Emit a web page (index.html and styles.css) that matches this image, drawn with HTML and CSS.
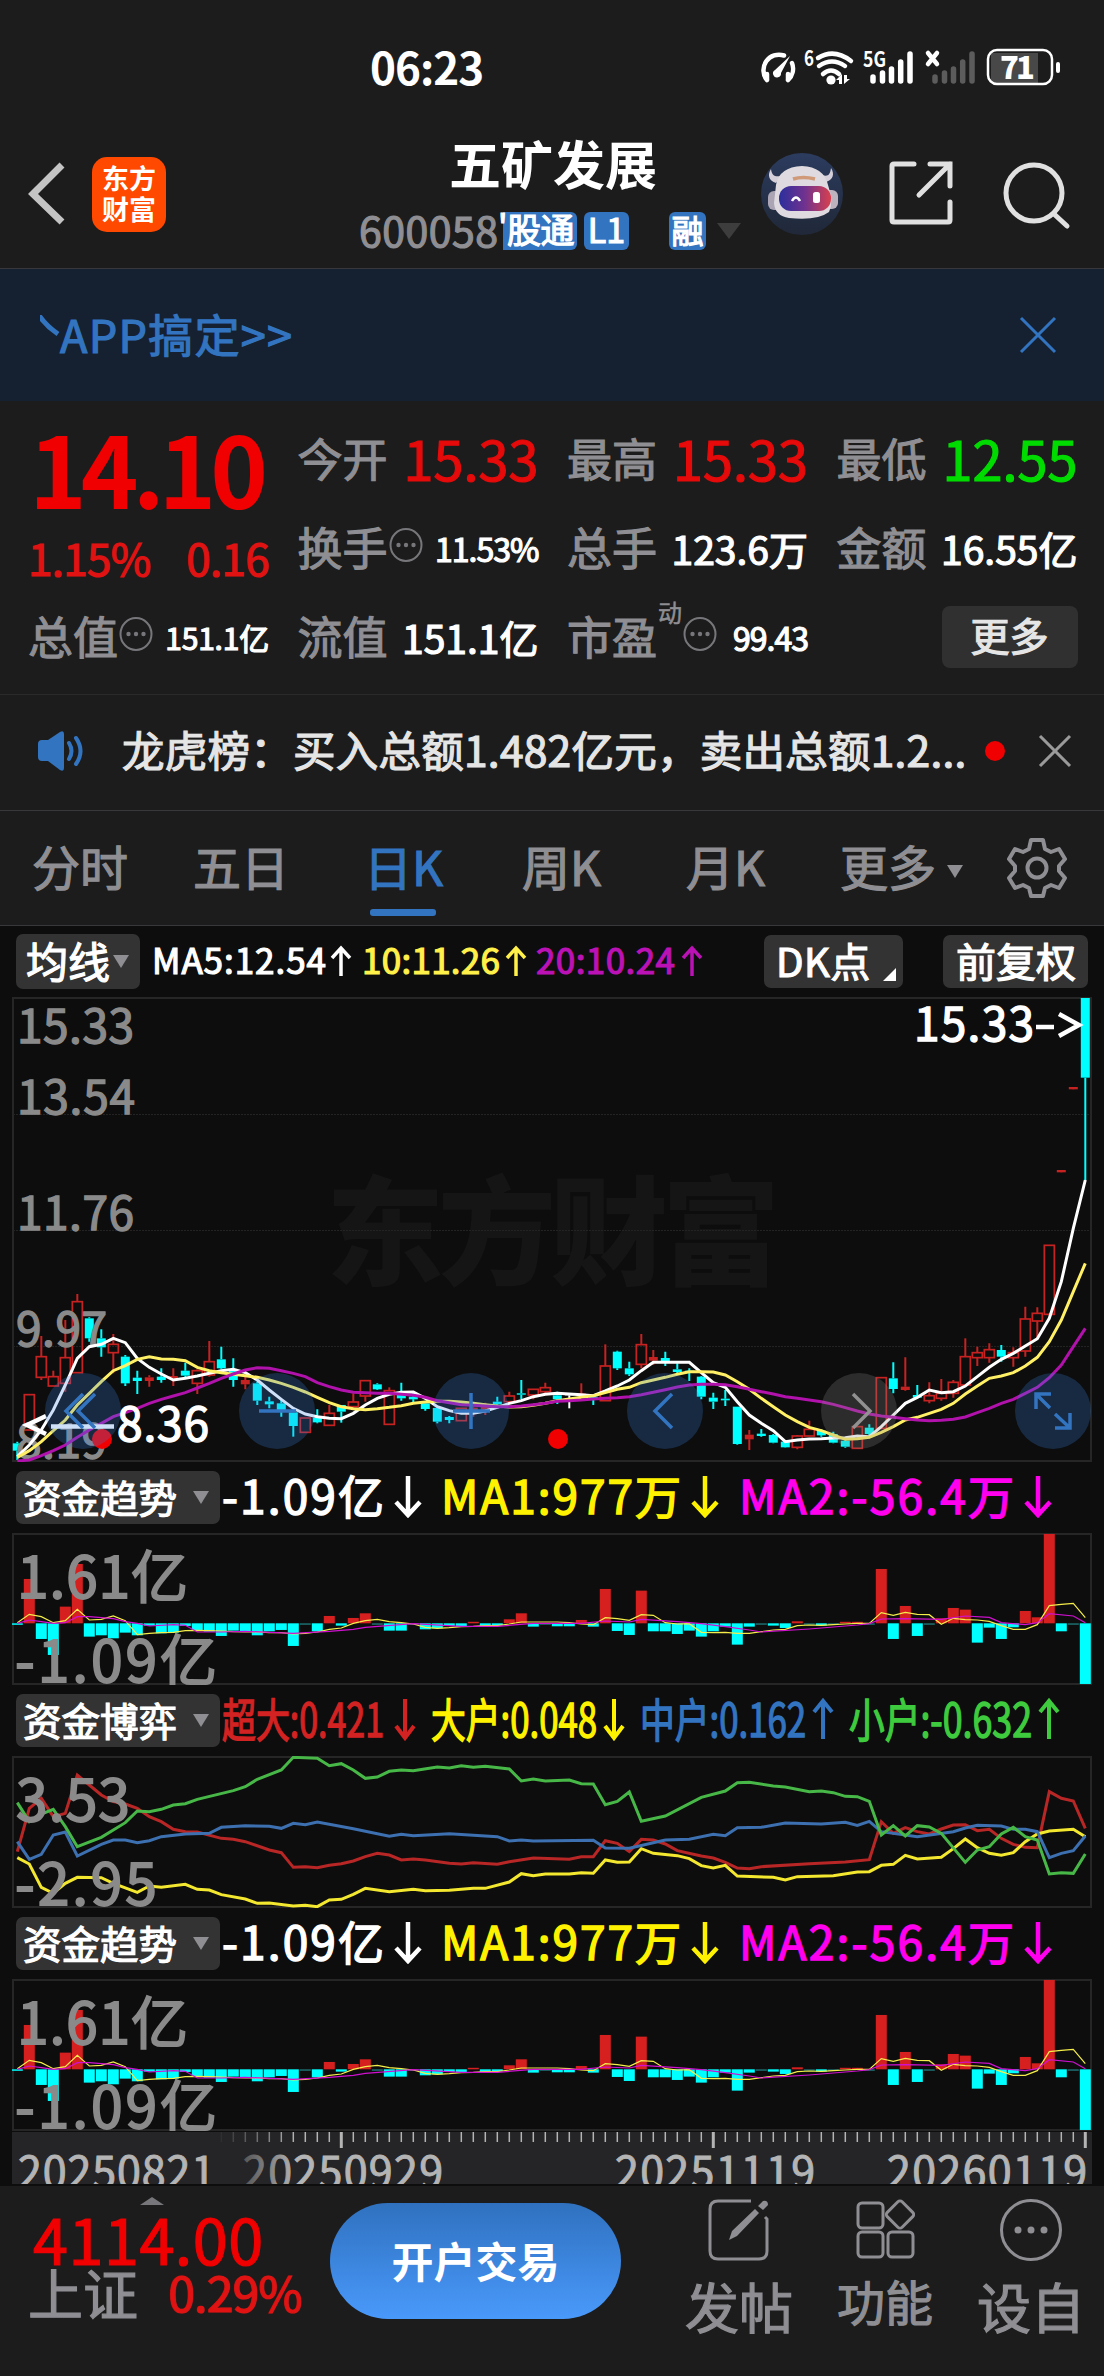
FILE: index.html
```html
<!DOCTYPE html>
<html lang="zh-CN">
<head>
    <meta charset="UTF-8">
    <meta name="viewport" content="width=device-width, initial-scale=1.0">
    <title>五矿发展 600058</title>
    <link rel="stylesheet" href="styles.css">
</head>
<body>
    <svg class="defs" width="0" height="0">
        <symbol id="down" viewBox="0 0 28 42"><path fill="none" d="M14 0V38M2 26L14 39L26 26"/></symbol>
        <symbol id="dots" viewBox="0 0 34 36">
            <ellipse cx="17" cy="18" rx="15.5" ry="16"/>
            <g class="dot"><circle cx="9.5" cy="18" r="2.2"/><circle cx="17" cy="18" r="2.2"/><circle cx="24.5" cy="18" r="2.2"/></g>
        </symbol>
    </svg>

    <div class="status-bar">
        <span class="clock">06:23</span>
        <svg class="status-icons" width="330" height="50" viewBox="740 44 330 50">
            <g class="w-line">
                <path d="M767 80A15.5 15.5 0 0 1 784 55.5M792 63A15.5 15.5 0 0 1 788 80M767 80V74M788 80V74"/>
                <path d="M818 58Q834 48 851 61M819 66Q832 57 845 66M823 74Q831 67 839 74"/>
            </g>
            <path class="w-fill" d="M790 56L781 73A4 4 0 1 1 775 70Z"/>
            <circle class="w-fill" cx="831" cy="80" r="4.6"/>
            <path class="w-fill" d="M836 80L842 74V84H839V80ZM844 75H847V79H850L844 84Z"/>
            <text class="st-small" x="804" y="66" textLength="10" lengthAdjust="spacingAndGlyphs">6</text>
            <text class="st-small" x="863" y="67" textLength="23" lengthAdjust="spacingAndGlyphs">5G</text>
            <g class="bars"><path d="M873 77V81M882.500 73V81M891.500 69V81M900.700 62V81M910 54V81"/></g>
            <g class="bars dim"><path d="M935 77V81M944.500 73V81M953.500 69V81M962.700 62V81M972 54V81"/></g>
            <path class="w-line" d="M928 53L937 64M937 53L928 64"/>
            <rect x="991" y="53" width="47" height="30" fill="#484848"/>
            <rect class="battery" x="988" y="50" width="64" height="34" rx="9"/>
            <rect class="w-fill" x="1056" y="62" width="4" height="11" rx="2"/>
            <text class="st-batt" x="1000" y="79" textLength="35">71</text>
        </svg>
    </div>

    <header class="header">
        <svg class="back" width="38" height="64" viewBox="0 0 38 64"><path d="M34 4L5 33L34 61"/></svg>
        <div class="logo">东方<br>财富</div>
        <div class="title">
            <h1>五矿发展</h1>
            <div class="sub">
                <span class="code">600058</span>
                <span class="tag cut">'股通</span>
                <span class="tag l1">L1</span>
                <span class="tag rong">融</span>
                <i class="tri big"></i>
            </div>
        </div>
        <svg class="avatar" width="82" height="82" viewBox="0 0 82 82">
            <defs>
                <linearGradient id="visor"><stop offset="0" stop-color="#2b2f9c"/><stop offset=".5" stop-color="#71328f"/><stop offset="1" stop-color="#d8404e"/></linearGradient>
                <linearGradient id="sky" x2="0" y2="1"><stop offset="0" stop-color="#2c3c5f"/><stop offset="1" stop-color="#202838"/></linearGradient>
            </defs>
            <circle cx="41" cy="41" r="41" fill="url(#sky)"/>
            <path fill="#d4cfd8" d="M15 30C8 28 6 22 10 16C11 23 14 24 20 23ZM65 29C72 27 74 21 70 15C69 22 67 24 61 22Z"/>
            <rect x="7" y="38" width="14" height="19" rx="6" fill="#aaa4b4"/>
            <rect x="63" y="37" width="14" height="19" rx="6" fill="#bcb3bf"/>
            <path fill="#dedae0" d="M15 32Q18 14 41 13Q63 14 67 32Q73 49 68 59Q56 68 28 65Q14 63 13 50Z"/>
            <rect x="18" y="33" width="52" height="25" rx="12" fill="url(#visor)"/>
            <path d="M32 26Q42 23 54 26" stroke="#d09a78" stroke-width="3.500" fill="none"/>
            <path d="M31 48Q35 41 39 48" stroke="#fff" stroke-width="2.500" fill="none"/>
            <rect x="52" y="39" width="7" height="11" rx="2.500" fill="#fff"/>
        </svg>
        <svg class="share" width="68" height="68" viewBox="0 0 68 68"><path d="M26 4H6Q4 4 4 6V60Q4 62 6 62H60Q62 62 62 60V42M42 4H62V26M62 4L31 35"/></svg>
        <svg class="search" width="70" height="70" viewBox="0 0 70 70"><circle cx="32" cy="33" r="28"/><path d="M52 54L65 66"/></svg>
    </header>

    <div class="banner">
        <svg class="stroke" width="20" height="22" viewBox="0 0 20 22"><path d="M-2 -1Q6 11 18 19"/></svg>
        <span>APP搞定&gt;&gt;</span>
        <svg class="close" width="38" height="38" viewBox="0 0 38 38"><path d="M2 2L36 36M36 2L2 36"/></svg>
    </div>

    <section class="quote">
        <div class="price-box">
            <div class="price">14.10</div>
            <div class="change"><span>1.15%</span><span>0.16</span></div>
        </div>
        <div class="cell"><label>今开</label><b class="lg red">15.33</b></div>
        <div class="cell"><label>最高</label><b class="lg red">15.33</b></div>
        <div class="cell"><label>最低</label><b class="lg green">12.55</b></div>
        <div class="cell"><label>换手</label><svg class="more"><use href="#dots"/></svg><b class="sm">11.53%</b></div>
        <div class="cell"><label>总手</label><b>123.6万</b></div>
        <div class="cell"><label>金额</label><b>16.55亿</b></div>
        <div class="cell"><label>总值</label><svg class="more"><use href="#dots"/></svg><b class="xs">151.1亿</b></div>
        <div class="cell"><label>流值</label><b>151.1亿</b></div>
        <div class="cell"><label>市盈</label><sup>动</sup><svg class="more"><use href="#dots"/></svg><b class="sm">99.43</b></div>
        <div class="cell"><button class="more-btn">更多</button></div>
    </section>

    <div class="news">
        <svg class="speaker" width="50" height="42" viewBox="0 0 50 42">
            <path class="body" d="M2 14Q2 10 6 10H12L24 2Q28 0 28 4V38Q28 42 24 40L12 31H6Q2 31 2 27Z"/>
            <path class="wave" d="M33 13Q38 21 33 29M40 8Q49 21 40 34"/>
        </svg>
        <p>龙虎榜：买入总额1.482亿元，卖出总额1.2...</p>
        <i class="red-dot"></i>
        <svg class="close" width="34" height="34" viewBox="0 0 34 34"><path d="M2 2L32 32M32 2L2 32"/></svg>
    </div>

    <nav class="tabs">
        <span>分时</span>
        <span>五日</span>
        <span class="active">日K</span>
        <span>周K</span>
        <span>月K</span>
        <span>更多<i class="tri"></i></span>
        <svg class="gear" width="60" height="60" viewBox="0 0 60 60">
            <path d="M24 2H36L38 11L44 14L52 11L58 21L52 28V33L58 40L52 50L44 47L38 50L36 58H24L22 50L16 47L8 50L2 40L8 33V28L2 21L8 11L16 14L22 11Z"/>
            <circle cx="30" cy="30" r="9.500"/>
        </svg>
    </nav>

    <main class="charts">
        <div class="legend ma">
            <button class="chip short">均线<i class="tri"></i></button>
            <svg class="values" width="600" height="71" viewBox="145 926 600 71">
                <g fill="#fff" stroke="#fff"><text x="152" y="974" textLength="174">MA5:12.54</text><path d="M341 976V948M332 958L341 948L350 958"/></g>
                <g fill="#fff04a" stroke="#fff04a"><text x="362" y="974" textLength="138">10:11.26</text><path d="M516 976V948M507 958L516 948L525 958"/></g>
                <g fill="#bb12b5" stroke="#bb12b5"><text x="536" y="974" textLength="139">20:10.24</text><path d="M692 976V948M683 958L692 948L701 958"/></g>
            </svg>
            <button class="chip dk">DK点<i class="corner"></i></button>
            <button class="chip fq">前复权</button>
        </div>
        <svg id="kline" class="chart" width="1080" height="465" viewBox="12 997 1080 465"></svg>

        <div class="legend">
            <button class="chip">资金趋势<i class="tri"></i></button>
            <svg class="values" width="870" height="71" viewBox="222 1462 870 71">
                <g fill="#fff" stroke="#fff"><text x="222" y="1514" textLength="162">-1.09亿</text><use href="#down" x="394" y="1476" width="28" height="42"/></g>
                <g fill="#fff200" stroke="#fff200"><text x="441" y="1514" textLength="240">MA1:977万</text><use href="#down" x="691" y="1476" width="28" height="42"/></g>
                <g fill="#f0e" stroke="#f0e"><text x="739" y="1514" textLength="275">MA2:-56.4万</text><use href="#down" x="1024" y="1476" width="28" height="42"/></g>
            </svg>
        </div>
        <svg class="chart fund" width="1080" height="152" viewBox="12 1533 1080 152"></svg>

        <div class="legend">
            <button class="chip">资金博弈<i class="tri"></i></button>
            <svg class="values narrow" width="870" height="71" viewBox="222 1685 870 71">
                <g fill="#d32222" stroke="#d32222"><text x="222" y="1737" textLength="162" lengthAdjust="spacingAndGlyphs">超大:0.421</text><path d="M405 1699V1737M396 1726L405 1738L414 1726"/></g>
                <g fill="#fff200" stroke="#fff200"><text x="431" y="1737" textLength="166" lengthAdjust="spacingAndGlyphs">大户:0.048</text><path d="M614 1699V1737M605 1726L614 1738L623 1726"/></g>
                <g fill="#3374c0" stroke="#3374c0"><text x="640" y="1737" textLength="166" lengthAdjust="spacingAndGlyphs">中户:0.162</text><path d="M823 1739V1701M814 1712L823 1701L832 1712"/></g>
                <g fill="#3ecb3e" stroke="#3ecb3e"><text x="849" y="1737" textLength="183" lengthAdjust="spacingAndGlyphs">小户:-0.632</text><path d="M1049 1739V1701M1040 1712L1049 1701L1058 1712"/></g>
            </svg>
        </div>
        <svg id="game" class="chart" width="1080" height="152" viewBox="12 1756 1080 152"></svg>

        <div class="legend">
            <button class="chip">资金趋势<i class="tri"></i></button>
            <svg class="values" width="870" height="71" viewBox="222 1462 870 71">
                <g fill="#fff" stroke="#fff"><text x="222" y="1514" textLength="162">-1.09亿</text><use href="#down" x="394" y="1476" width="28" height="42"/></g>
                <g fill="#fff200" stroke="#fff200"><text x="441" y="1514" textLength="240">MA1:977万</text><use href="#down" x="691" y="1476" width="28" height="42"/></g>
                <g fill="#f0e" stroke="#f0e"><text x="739" y="1514" textLength="275">MA2:-56.4万</text><use href="#down" x="1024" y="1476" width="28" height="42"/></g>
            </svg>
        </div>
        <svg class="chart fund" width="1080" height="152" viewBox="12 1533 1080 152"></svg>
        <svg id="axis" class="chart axis" width="1080" height="52" viewBox="12 2134 1080 52"></svg>
    </main>

    <footer class="bottom">
        <div class="index">
            <i class="tri up"></i>
            <div class="index-value">4114.00</div>
            <div class="index-row"><span>上证</span><b>0.29%</b></div>
        </div>
        <button class="open-btn">开户交易</button>
        <div class="action post">
            <svg width="62" height="62" viewBox="0 0 62 62"><path d="M43 2H10Q2 2 2 10V52Q2 60 10 60H51Q59 60 59 52V20L57 18"/><path class="solid" d="M21 41L24 32L47 10L51 14L29 37ZM50 7L55 2Q60 1 60 6L55 11Z"/></svg>
            <span>发帖</span>
        </div>
        <div class="action func">
            <svg width="60" height="60" viewBox="0 0 60 60"><rect x="3" y="4" width="25" height="25" rx="4"/><rect x="3" y="33" width="25" height="25" rx="4"/><rect x="33" y="33" width="25" height="25" rx="4"/><rect x="34.500" y="5" width="21" height="21" rx="3" transform="rotate(45 45 15.500)"/></svg>
            <span>功能</span>
        </div>
        <div class="action set">
            <svg width="62" height="62" viewBox="0 0 62 62"><circle cx="31" cy="31" r="29.500"/><g class="solid"><circle cx="18" cy="31" r="3.500"/><circle cx="31" cy="31" r="3.500"/><circle cx="44" cy="31" r="3.500"/></g></svg>
            <span>设自</span>
        </div>
    </footer>

    <script src="charts.js"></script>
</body>
</html>
```
FILE: styles.css
```css
* {
    box-sizing: border-box;
}
body {
    margin: 0;
    width: 1104px;
    height: 2376px;
    overflow: hidden;
    background: #1c1c1c;
    color: #fff;
    font-family: "Noto Sans CJK SC", sans-serif;
    font-weight: 400;
    -webkit-text-stroke: 1.200px;
}
button {
    border: 0;
    padding: 0;
    color: #fff;
    font-family: inherit;
    -webkit-text-stroke: 1.200px;
}
svg {
    display: block;
    flex: none;
    fill: none;
}
.defs {
    position: absolute;
}
.tri {
    display: inline-block;
    border: 8px solid transparent;
    border-top: 13px solid #8e8e93;
    border-bottom: 0;
}
.tri.big {
    border-width: 16px 12px 0;
    border-top-color: #3d3d3d;
    margin-left: 11px;
}
.tri.up {
    border: 12px solid transparent;
    border-top: 0;
    border-bottom: 8px solid #77777b;
}

/* status bar */
.status-bar {
    display: flex;
    height: 115px;
    padding: 44px 0 0 370px;
    -webkit-text-stroke: 0;
}
.clock {
    width: 370px;
    font-size: 44px;
    line-height: 44px;
    font-weight: 700;
    letter-spacing: -1px;
}
.w-line {
    stroke: #fff;
    stroke-width: 4.500;
    stroke-linecap: round;
}
.w-fill {
    fill: #fff;
}
.bars {
    stroke: #fff;
    stroke-width: 5.500;
    stroke-linecap: round;
}
.dim {
    stroke: #5c5c5c;
}
.battery {
    stroke: #fff;
    stroke-width: 2.500;
}
.st-small {
    fill: #fff;
    font-size: 21px;
    font-weight: 700;
}
.st-batt {
    fill: #fff;
    font-size: 31px;
    font-weight: 900;
}

/* header */
.header {
    display: flex;
    height: 154px;
    padding-left: 28px;
    border-bottom: 1px solid #38383c;
}
.back {
    margin-top: 46px;
    stroke: #c4c4c4;
    stroke-width: 7;
}
.logo {
    width: 74px;
    height: 75px;
    margin: 42px 0 0 26px;
    padding-top: 5px;
    border-radius: 15px;
    background: #ff4800;
    font-size: 27px;
    line-height: 31px;
    font-weight: 700;
    text-align: center;
    -webkit-text-stroke: 0;
}
.title {
    width: 400px;
    margin-left: 193px;
}
.title h1 {
    margin: 18px 0 0 90px;
    font-size: 52px;
    line-height: 60px;
    font-weight: 700;
    -webkit-text-stroke: 0;
}
.sub {
    display: flex;
    align-items: center;
    height: 38px;
    margin-top: 19px;
}
.code {
    width: 144px;
    margin-top: -5px;
    color: #8e8e93;
    font-size: 41px;
    line-height: 36px;
    letter-spacing: 0.500px;
}
.tag {
    height: 38px;
    border-radius: 6px;
    background: #3374c0;
    font-size: 34px;
    line-height: 34px;
    text-align: center;
}
.tag.cut {
    display: flex;
    justify-content: flex-end;
    width: 74px;
    padding-right: 3px;
    border-radius: 0 6px 6px 0;
    white-space: nowrap;
    letter-spacing: -0.500px;
}
.tag.l1 {
    width: 45px;
    margin-left: 7px;
}
.tag.rong {
    width: 37px;
    margin-left: 40px;
    font-size: 32px;
}
.avatar {
    margin: 38px 0 0 2px;
}
.share, .search {
    stroke: #e0e0e0;
    stroke-width: 5;
    stroke-linecap: round;
    margin: 45px 0 0 45px;
}
.search {
    margin-left: 46px;
}

.banner {
    display: flex;
    align-items: center;
    height: 132px;
    padding: 0 47px 0 40px;
    background: #152130;
    color: #3374c0;
    font-size: 45px;
    line-height: 60px;
    letter-spacing: 1.300px;
}
.banner .stroke {
    stroke: #3374c0;
    stroke-width: 5;
    margin-top: -18px;
}
.banner span {
    margin-top: -3px;
}
.banner .close {
    margin-left: auto;
    stroke: #3374c0;
    stroke-width: 3;
}

/* quote */
.quote {
    display: grid;
    grid-template-columns: repeat(4, 241px);
    grid-template-rows: repeat(3, 89px);
    column-gap: 28.500px;
    height: 294px;
    padding: 12px 0 0 28px;
    border-bottom: 1px solid #2a2a2a;
}
.price-box {
    grid-row: span 2;
    color: #f00000;
}
.price {
    margin: 8px 0 0 1px;
    font-size: 98px;
    line-height: 90px;
    font-weight: 700;
    letter-spacing: -6px;
    -webkit-text-stroke: 0;
}
.change {
    display: flex;
    justify-content: space-between;
    margin-top: 21px;
    color: #e01212;
    font-size: 44px;
    line-height: 50px;
    letter-spacing: -0.700px;
}
.cell {
    position: relative;
    display: flex;
    align-items: center;
}
.cell label {
    color: #8e8e93;
    font-size: 45px;
    line-height: 80px;
}
.cell b {
    margin-left: auto;
    padding-top: 2px;
    font-size: 39px;
    font-weight: 400;
    line-height: 60px;
}
.cell .lg {
    padding: 0;
    font-size: 54px;
}
.cell .sm {
    font-size: 32px;
    letter-spacing: -1px;
}
.cell .xs {
    font-size: 30px;
    letter-spacing: -0.200px;
}
.cell .red {
    color: #e60a0a;
}
.cell .green {
    color: #00dc00;
}
.cell sup {
    position: absolute;
    left: 91px;
    top: 9px;
    color: #8e8e93;
    font-size: 24px;
    line-height: 24px;
    -webkit-text-stroke: 0.500px;
}
.more {
    width: 34px;
    height: 36px;
    margin: -4px 0 0 1px;
    stroke: #77777b;
    stroke-width: 2;
}
sup + .more {
    margin-left: 26px;
}
.dot {
    fill: #77777b;
    stroke: none;
}
.more-btn {
    width: 136px;
    height: 62px;
    margin: 2px 0 0 auto;
    padding-bottom: 5px;
    border-radius: 8px;
    background: #303030;
    color: #e5e5e5;
    font-size: 39px;
    line-height: 50px;
}

/* news */
.news {
    display: flex;
    align-items: center;
    height: 116px;
    padding: 0 32px 4px 36px;
    border-bottom: 1px solid #38383a;
}
.speaker .body {
    fill: #3374c0;
}
.speaker .wave {
    stroke: #3374c0;
    stroke-width: 4;
    stroke-linecap: round;
}
.news p {
    width: 852px;
    margin: 0 0 4px 36px;
    color: #e5e5e5;
    font-size: 42.500px;
    line-height: 60px;
    letter-spacing: 0.250px;
    white-space: nowrap;
}
.red-dot {
    width: 20px;
    height: 20px;
    margin-left: 11px;
    border-radius: 50%;
    background: #f00000;
}
.news .close {
    margin-left: auto;
    stroke: #9a9a9a;
    stroke-width: 3;
}

/* period tabs */
.tabs {
    display: grid;
    grid-template-columns: 161px 171px 158px 164px 154px 167px 60px;
    height: 115px;
    padding-left: 32px;
    border-bottom: 1px solid #38383a;
    color: #8e8e93;
    font-size: 48px;
    line-height: 108px;
}
.tabs span {
    position: relative;
    white-space: nowrap;
}
.tabs .tri {
    margin: 0 0 8px 11px;
}
.tabs .active {
    color: #3374c0;
}
.tabs .active::after {
    content: "";
    position: absolute;
    left: 6px;
    bottom: 9px;
    width: 66px;
    height: 7px;
    border-radius: 3px;
    background: #3374c0;
}
.gear {
    margin-top: 27px;
    stroke: #8e8e93;
    stroke-width: 4;
    stroke-linejoin: round;
}

/* charts */
.charts {
    height: 1260px;
    padding-left: 12px;
    overflow: hidden;
    background: #0d0d0d;
}
.legend {
    display: flex;
    align-items: center;
    height: 71px;
    padding-left: 4px;
}
.chip {
    display: flex;
    align-items: center;
    justify-content: space-between;
    width: 204px;
    height: 53px;
    margin-right: 2px;
    padding: 0 11px 4px 7px;
    border-radius: 7px;
    background: #333;
    font-size: 38.500px;
    line-height: 50px;
}
.chip .tri {
    margin-top: 3px;
}
.chip.short {
    width: 124px;
    height: 55px;
    margin-right: 5px;
    padding-left: 10px;
    font-size: 42px;
}
.chip.dk {
    position: relative;
    width: 139px;
    margin: 0 40px 0 19px;
    padding-left: 12px;
    font-size: 40px;
    letter-spacing: 0.500px;
}
.chip.fq {
    width: 145px;
    margin: 0;
    padding-left: 13px;
    font-size: 40px;
}
.corner {
    position: absolute;
    right: 7px;
    bottom: 7px;
    border-left: 13px solid transparent;
    border-bottom: 13px solid #fff;
}
.values {
    stroke-width: 4.500;
}
.values path {
    fill: none;
}
.ma .values {
    stroke-width: 3.500;
}
.narrow {
    stroke-width: 4;
}
.values text {
    stroke-width: 1.400;
    font-size: 46px;
}
.ma .values text {
    stroke-width: 1.200;
    font-size: 35px;
}
.chart {
    overflow: hidden;
}
.frame {
    stroke: #262626;
    stroke-width: 2;
}
.grid {
    stroke: #232323;
    stroke-dasharray: 2 1;
}
.scale {
    fill: #8a8a8a;
    stroke: #8a8a8a;
    stroke-width: 1.400;
    font-size: 46px;
}
.scale.tall {
    stroke-width: 1.800;
    font-size: 57px;
}
.mark {
    fill: #fff;
    stroke: #fff;
    stroke-width: 1.400;
    font-size: 46px;
}
.watermark {
    fill: #151515;
    font-size: 118px;
    font-weight: 900;
}
.nav-btn circle {
    fill: rgba(55, 130, 228, 0.25);
}
.nav-btn path {
    stroke: #3374c0;
    stroke-width: 3.500;
}
.nav-btn.off circle {
    fill: rgba(140, 140, 140, 0.25);
}
.nav-btn.off path {
    stroke: #919191;
}
.axis {
    background: #252527;
    margin-top: 1px;
}
.date {
    fill: #b4b4b4;
    stroke: #b4b4b4;
    font-size: 43px;
}

/* bottom bar */
.bottom {
    position: relative;
    display: flex;
    height: 190px;
    background: #1c1c1c;
    color: #8e8e93;
}
.index {
    position: relative;
    width: 330px;
    padding: 22px 0 0 33px;
}
.index .tri {
    position: absolute;
    left: 140px;
    top: 11px;
}
.index-value {
    color: #f00000;
    font-size: 63px;
    line-height: 60px;
    letter-spacing: 0.500px;
}
.index-row {
    display: flex;
    align-items: center;
    margin-top: -5px;
    font-size: 55px;
    line-height: 56px;
}
.index-row span {
    margin-left: -5px;
}
.index-row b {
    margin-left: 30px;
    color: #e01212;
    font-size: 48px;
    font-weight: 400;
    letter-spacing: -0.800px;
}
.open-btn {
    width: 291px;
    height: 116px;
    margin-top: 17px;
    padding-bottom: 4px;
    border-radius: 58px;
    background: linear-gradient(#2f71bf, #4999fb);
    font-size: 42px;
    font-weight: 700;
    -webkit-text-stroke: 0;
}
.action {
    display: flex;
    flex-direction: column;
    align-items: center;
    width: 120px;
    padding-top: 13px;
    font-size: 54px;
    line-height: 60px;
}
.action svg {
    stroke: #8e8e93;
    stroke-width: 3;
}
.action span {
    margin-top: 15px;
    white-space: nowrap;
}
.action .solid {
    fill: #8e8e93;
    stroke: none;
}
.post {
    margin-left: 58px;
}
.func {
    margin-left: 26px;
    font-size: 48px;
}
.func span {
    margin-top: 11px;
}
.set {
    margin-left: 26px;
}
```
FILE: charts.js
```js
// x of the candle with index i
const X = i => 17.3 + 12 * i;
const RED = "#c62222";
const CYAN = "#00ffff";

// evenly spaced series: one value per trading day
const line = (values, top, color, width) =>
    `<polyline points="${values.map((v, i) => [X(i), top + v / 3].join()).join(" ")}" stroke="${color}" stroke-width="${width}"/>`;

// sparse series: [day, value] pairs
const sparse = (pairs, top, color, width) =>
    `<polyline points="${pairs.map(([i, v]) => [X(i), top + v / 3].join()).join(" ")}" stroke="${color}" stroke-width="${width}"/>`;

const frame = (y, h) => `<rect class="frame" x="13" y="${y + 1}" width="1078" height="${h - 2}"/>`;

const label = (x, y, w, text, cls = "scale") =>
    `<text class="${cls}" x="${x}" y="${y}" textLength="${w}">${text}</text>`;

// type, body top, body bottom, high, low (h = hollow red, r = solid red, c = cyan, w = white)
const candles = [
    "c,1390,1412,1385,1440", "h,1244,1350,1244,1350", "h,1130,1192,1068,1200", "h,1190,1218,1172,1218", "h,1133,1210,1020,1235",
    "h,965,1178,942,1178", "c,1015,1075,1012,1085", "c,1075,1102,1048,1130", "h,1093,1118,1062,1180", "c,1130,1210,1125,1218",
    "c,1193,1203,1172,1242", "r,1192,1203,1186,1220", "c,1190,1200,1165,1208", "r,1188,1198,1165,1218", "c,1172,1187,1148,1192",
    "h,1172,1210,1168,1242", "h,1145,1185,1083,1190", "c,1138,1165,1100,1168", "c,1170,1200,1135,1220", "r,1200,1213,1190,1228",
    "c,1210,1262,1205,1275", "c,1264,1273,1250,1285", "c,1270,1292,1258,1310", "c,1297,1338,1297,1370", "h,1314,1357,1314,1357",
    "c,1313,1327,1288,1330", "h,1300,1336,1275,1336", "c,1275,1295,1275,1328", "h,1266,1280,1240,1290", "h,1202,1248,1202,1265",
    "c,1213,1228,1210,1230", "h,1232,1333,1222,1333", "c,1245,1255,1208,1262", "c,1250,1258,1238,1268", "c,1270,1287,1266,1292",
    "c,1284,1325,1284,1330", "c,1311,1320,1308,1330", "h,1285,1322,1285,1322", "r,1283,1295,1275,1310", "r,1275,1290,1268,1305",
    "c,1265,1273,1250,1280", "h,1248,1265,1235,1272", "c,1240,1244,1200,1258", "h,1228,1245,1228,1258", "h,1223,1235,1208,1245",
    "c,1246,1258,1235,1272", "w,1240,1246,1240,1285", "r,1240,1247,1210,1247", "c,1250,1260,1246,1275", "h,1158,1262,1093,1262",
    "c,1115,1165,1112,1170", "c,1165,1183,1145,1188", "h,1094,1153,1062,1165", "r,1131,1142,1110,1155", "c,1134,1143,1115,1158",
    "c,1168,1176,1150,1180", "c,1172,1177,1165,1203", "c,1190,1250,1188,1258", "c,1253,1265,1238,1287", "c,1256,1261,1230,1278",
    "c,1280,1392,1280,1394", "r,1364,1378,1350,1410", "c,1361,1368,1347,1370", "c,1365,1388,1362,1390", "c,1385,1402,1385,1403",
    "h,1368,1402,1365,1408", "h,1348,1368,1322,1368", "c,1352,1366,1348,1370", "c,1362,1388,1355,1390", "c,1382,1400,1380,1403",
    "h,1340,1405,1340,1405", "c,1343,1362,1333,1365", "h,1193,1345,1193,1345", "c,1195,1227,1147,1240", "r,1220,1230,1132,1232",
    "c,1245,1253,1215,1255", "h,1247,1262,1207,1270", "h,1240,1255,1197,1262", "h,1207,1240,1200,1253", "h,1130,1215,1075,1215",
    "h,1118,1133,1100,1158", "h,1109,1133,1090,1148", "c,1110,1130,1095,1145", "h,1118,1133,1102,1160", "h,1017,1113,980,1130",
    "h,1000,1023,982,1075", "h,796,1003,796,1003", "r,570,577,572,572", "r,321,328,323,323", "c,54,293,54,600"
];

const ma5 = [1430, 1395, 1350, 1290, 1215, 1135, 1100, 1093, 1075, 1088, 1135, 1162, 1182, 1200, 1195, 1188, 1180, 1172, 1168, 1178, 1200, 1230, 1258, 1285, 1302, 1310, 1315, 1316, 1300, 1275, 1255, 1243, 1237, 1236, 1255, 1280, 1292, 1300, 1300, 1293, 1282, 1270, 1262, 1250, 1243, 1240, 1242, 1244, 1247, 1233, 1218, 1200, 1172, 1147, 1147, 1147, 1147, 1178, 1208, 1222, 1265, 1305, 1330, 1352, 1385, 1380, 1377, 1376, 1374, 1373, 1368, 1370, 1340, 1305, 1270, 1252, 1230, 1238, 1235, 1218, 1190, 1162, 1138, 1120, 1098, 1076, 1015, 905, 745, 600];
const ma10 = [1432, 1412, 1385, 1352, 1320, 1275, 1240, 1205, 1172, 1157, 1138, 1130, 1137, 1138, 1142, 1162, 1172, 1178, 1183, 1187, 1192, 1200, 1210, 1222, 1236, 1252, 1268, 1280, 1286, 1289, 1286, 1282, 1277, 1270, 1266, 1264, 1264, 1266, 1270, 1274, 1278, 1281, 1280, 1276, 1270, 1262, 1257, 1252, 1247, 1238, 1228, 1222, 1208, 1200, 1192, 1183, 1175, 1175, 1176, 1185, 1205, 1228, 1255, 1280, 1305, 1325, 1342, 1352, 1365, 1378, 1376, 1372, 1357, 1340, 1320, 1312, 1300, 1288, 1270, 1242, 1218, 1195, 1188, 1178, 1158, 1132, 1085, 1020, 935, 850];
const ma20 = [1443, 1440, 1427, 1412, 1395, 1372, 1350, 1330, 1310, 1298, 1285, 1270, 1258, 1248, 1238, 1224, 1210, 1195, 1182, 1170, 1163, 1165, 1172, 1180, 1190, 1208, 1220, 1230, 1237, 1238, 1240, 1240, 1243, 1246, 1252, 1262, 1268, 1274, 1276, 1278, 1280, 1280, 1278, 1274, 1270, 1264, 1262, 1260, 1257, 1255, 1253, 1250, 1244, 1237, 1229, 1221, 1215, 1213, 1213, 1214, 1220, 1228, 1235, 1242, 1250, 1255, 1260, 1265, 1273, 1283, 1293, 1302, 1308, 1312, 1316, 1320, 1322, 1321, 1318, 1311, 1298, 1285, 1270, 1258, 1240, 1222, 1193, 1155, 1100, 1045];

function drawKline() {
    const Y = v => 980 + v / 3;
    let out = `<text class="watermark" x="326" y="1276" textLength="454">东方财富</text>` + frame(997, 465);
    [1114, 1230, 1346].forEach(y => {
        out += `<path class="grid" d="M13 ${y}.500H1091"/>`;
    });
    candles.forEach((c, i) => {
        const [type, ...v] = c.split(",");
        const [top, bottom, high, low] = v.map(n => Y(+n));
        const color = type === "c" ? CYAN : type === "w" ? "#fff" : RED;
        const x = X(i);
        out += `<path d="M${x} ${high}V${top}M${x} ${bottom}V${low}" stroke="${color}" stroke-width="2"/>`;
        out += type === "h"
            ? `<rect x="${x - 5}" y="${top}" width="10" height="${bottom - top}" stroke="${color}" stroke-width="1.700"/>`
            : `<rect x="${x - 4.5}" y="${top}" width="9" height="${bottom - top}" fill="${color}"/>`;
    });
    out += label(17, 1043, 117, "15.33") + label(17, 1114, 118, "13.54") + label(17, 1230, 117, "11.76");
    out += label(16, 1346, 91, "9.97") + label(16, 1458, 91, "8.19");
    out += line(ma5, 980, "#fff", 3) + line(ma10, 980, "#fff066", 3) + line(ma20, 980, "#b012ab", 3);
    out += `<circle cx="102" cy="1439" r="10" fill="#f00000"/><circle cx="558" cy="1439" r="10" fill="#f00000"/>`;
    out += `<path d="M46 1416L27 1425L46 1434M51 1426.500H114" stroke="#fff" stroke-width="4.500"/>`;
    out += label(117, 1441, 92, "8.36", "mark") + label(914, 1041, 120, "15.33", "mark");
    out += `<path d="M1036 1027H1054M1059 1014L1079 1025L1059 1036" stroke="#fff" stroke-width="4.500"/>`;

    const icons = [
        [83, "M83 1394L66 1411L83 1428M95 1394L78 1411L95 1428"],
        [277, "M259 1411H296"],
        [471, "M453 1411H490M471 1393V1429"],
        [665, "M672 1394L655 1411L672 1428"],
        [859, "M853 1394L870 1411L853 1428"],
        [1053, "M1036 1409V1394H1051M1036 1394L1050 1408M1055 1414L1070 1428M1070 1413V1428H1055"]
    ];
    icons.forEach(([x, d], i) => {
        out += `<g class="nav-btn${i === 4 ? " off" : ""}"><circle cx="${x}" cy="1411" r="38"/><path d="${d}"/></g>`;
    });
    document.getElementById("kline").innerHTML = out;
}

const flow = [-4, 133, -47, -95, 50, 178, -40, -36, -45, -28, -36, -7, -30, -28, -8, -20, -25, -38, -22, -26, -36, -24, -20, -68, -3, -24, 22, -7, 16, 30, -3, -22, -22, -2, -18, -15, -8, -10, 3, -10, -6, 12, 30, -10, -3, -9, -9, 10, -10, 103, -23, -35, 98, -24, -24, -32, -22, -40, -24, -10, -64, -10, -3, -7, -14, 6, -3, -7, -3, 3, 3, -3, 163, -47, 52, -38, -3, 15, 46, 41, -58, -13, -47, -12, 37, 18, 268, -24, -3, -182];
const flowMa1 = [488, 463, 470, 488, 482, 448, 480, 478, 468, 482, 524, 520, 518, 517, 512, 511, 512, 513, 515, 516, 516, 518, 518, 522, 520, 516, 508, 504, 490, 482, 478, 485, 488, 492, 502, 505, 503, 500, 499, 497, 497, 492, 486, 486, 486, 486, 488, 492, 494, 473, 476, 481, 464, 466, 488, 492, 491, 517, 518, 517, 520, 520, 515, 510, 508, 497, 495, 496, 494, 492, 490, 490, 458, 466, 457, 463, 464, 493, 475, 479, 480, 484, 497, 508, 508, 494, 437, 433, 430, 473];
const flowMa2 = [[0, 490], [1, 480], [2, 485], [3, 490], [4, 488], [5, 470], [6, 470], [8, 476], [9, 485], [10, 490], [11, 498], [13, 494], [14, 496], [15, 516], [17, 516], [19, 514], [23, 520], [26, 514], [28, 508], [29, 502], [33, 491], [37, 499], [40, 499], [43, 490], [47, 490], [49, 483], [51, 486], [52, 478], [55, 485], [57, 491], [59, 500], [61, 510], [62, 516], [66, 507], [70, 495], [71, 491], [72, 477], [74, 476], [77, 478], [79, 468], [81, 472], [82, 488], [84, 494], [85, 488], [86, 461], [88, 468], [89, 488]];

function drawFund(svg) {
    const zero = 1623.3;
    let out = frame(1533, 152);
    flow.forEach((v, i) => {
        const h = Math.max(Math.abs(v) / 3, 1.5);
        const color = v > 0 ? "#d62020" : v < -3 ? CYAN : "#1d6f70";
        out += `<rect x="${X(i) - 5.5}" y="${v > 0 ? zero - h : zero}" width="11" height="${h}" fill="${color}"/>`;
    });
    out += line(flowMa1, 1460, "#f5ee4a", 1.2) + sparse(flowMa2, 1460, "#d010d0", 1.2);
    out += label(17, 1598, 171, "1.61亿", "scale tall") + label(15, 1682, 202, "-1.09亿", "scale tall");
    svg.innerHTML = out;
}

const superBig = [[0, 1175], [1, 1045], [2, 1015], [3, 1070], [4, 1060], [5, 945], [6, 975], [7, 1005], [8, 1025], [9, 1032], [10, 1045], [11, 1070], [12, 1085], [13, 1108], [14, 1115], [15, 1116], [17, 1135], [18, 1138], [19, 1145], [21, 1170], [22, 1178], [23, 1222], [24, 1220], [25, 1223], [26, 1216], [27, 1211], [28, 1203], [29, 1190], [30, 1180], [31, 1185], [32, 1200], [33, 1197], [34, 1200], [36, 1210], [37, 1212], [38, 1208], [40, 1213], [41, 1205], [43, 1194], [46, 1198], [47, 1190], [48, 1190], [49, 1142], [50, 1150], [51, 1175], [52, 1138], [53, 1140], [54, 1152], [55, 1172], [57, 1188], [58, 1194], [59, 1207], [60, 1224], [61, 1226], [62, 1220], [66, 1211], [69, 1206], [71, 1199], [72, 1085], [73, 1120], [74, 1103], [75, 1115], [76, 1122], [77, 1107], [78, 1095], [79, 1094], [80, 1112], [81, 1108], [82, 1135], [83, 1153], [84, 1162], [85, 1163], [86, 995], [87, 1015], [88, 1023], [89, 1105]];
const big = [[0, 1193], [1, 1212], [2, 1282], [3, 1300], [4, 1270], [5, 1252], [7, 1253], [8, 1270], [10, 1297], [11, 1278], [12, 1282], [14, 1273], [15, 1288], [16, 1290], [17, 1304], [19, 1317], [20, 1330], [21, 1329], [23, 1338], [24, 1336], [25, 1340], [26, 1320], [27, 1318], [28, 1303], [29, 1285], [31, 1295], [33, 1288], [34, 1292], [36, 1291], [38, 1285], [39, 1285], [41, 1266], [42, 1241], [43, 1247], [44, 1242], [46, 1242], [47, 1238], [48, 1240], [49, 1200], [50, 1207], [51, 1206], [52, 1166], [53, 1180], [55, 1187], [56, 1196], [57, 1217], [58, 1224], [59, 1216], [60, 1248], [63, 1252], [64, 1260], [65, 1250], [68, 1247], [70, 1236], [71, 1235], [72, 1216], [73, 1213], [74, 1186], [75, 1197], [77, 1192], [78, 1166], [79, 1137], [80, 1163], [81, 1180], [82, 1186], [83, 1178], [84, 1145], [85, 1122], [86, 1113], [88, 1108], [89, 1130]];
const middle = [[0, 1145], [1, 1198], [2, 1183], [3, 1125], [4, 1116], [5, 1188], [7, 1153], [8, 1140], [9, 1140], [10, 1148], [11, 1142], [12, 1130], [14, 1122], [16, 1120], [17, 1102], [19, 1097], [21, 1099], [22, 1105], [23, 1090], [24, 1094], [25, 1086], [28, 1106], [31, 1129], [32, 1123], [33, 1127], [36, 1121], [40, 1130], [41, 1143], [42, 1140], [43, 1143], [48, 1141], [49, 1164], [51, 1165], [54, 1140], [56, 1138], [58, 1123], [59, 1127], [60, 1103], [62, 1102], [64, 1089], [67, 1092], [69, 1087], [70, 1096], [71, 1084], [72, 1115], [75, 1130], [78, 1115], [79, 1104], [80, 1096], [82, 1098], [83, 1108], [84, 1108], [85, 1115], [86, 1193], [87, 1180], [88, 1172], [89, 1128]];
const small = [[0, 1028], [1, 1085], [2, 1062], [3, 1048], [4, 1100], [5, 1160], [7, 1132], [9, 1088], [10, 1053], [11, 1055], [12, 1048], [13, 1035], [14, 1031], [15, 1018], [18, 992], [19, 980], [20, 958], [22, 930], [23, 892], [25, 895], [26, 917], [27, 911], [28, 930], [29, 955], [30, 951], [31, 934], [32, 930], [33, 932], [35, 921], [36, 924], [37, 917], [38, 922], [39, 919], [41, 927], [42, 963], [43, 957], [44, 963], [46, 960], [47, 971], [48, 972], [49, 1034], [50, 1024], [51, 996], [52, 1084], [54, 1068], [57, 1012], [59, 993], [60, 968], [61, 967], [63, 978], [64, 981], [66, 995], [67, 993], [68, 998], [69, 1009], [70, 1010], [71, 1024], [72, 1125], [73, 1097], [74, 1128], [75, 1097], [76, 1101], [77, 1120], [79, 1207], [80, 1170], [81, 1160], [82, 1122], [83, 1102], [84, 1130], [85, 1140], [86, 1242], [87, 1238], [88, 1240], [89, 1182]];

function drawGame() {
    let out = frame(1756, 152);
    out += sparse(superBig, 1460, "#b92626", 3) + sparse(big, 1460, "#f3e72f", 3);
    out += sparse(middle, 1460, "#3d70b0", 3) + sparse(small, 1460, "#47b847", 3);
    out += label(16, 1821, 114, "3.53", "scale tall") + label(15, 1905, 142, "-2.95", "scale tall");
    document.getElementById("game").innerHTML = out;
}

function drawAxis() {
    let out = label(18, 2190, 197, "20250821", "date") + label(243, 2190, 200, "20250929", "date");
    out += label(615, 2190, 200, "20251119", "date") + label(887, 2190, 200, "20260119", "date");
    for (let i = 17; i < 90; i++) {
        const major = i === 27 || i === 58 || i === 89;
        out += `<path d="M${X(i)} 2134V${major ? 2150 : 2144}" stroke="#b4b4b4" stroke-width="${major ? 3 : 1.5}"/>`;
    }
    out += `<defs><linearGradient id="fade"><stop offset="0" stop-color="#252527"/><stop offset="1" stop-color="#252527" stop-opacity="0"/></linearGradient></defs>`;
    out += `<rect x="216" y="2134" width="80" height="52" fill="url(#fade)"/>`;
    document.getElementById("axis").innerHTML = out;
}

drawKline();
document.querySelectorAll(".fund").forEach(drawFund);
drawGame();
drawAxis();
```
